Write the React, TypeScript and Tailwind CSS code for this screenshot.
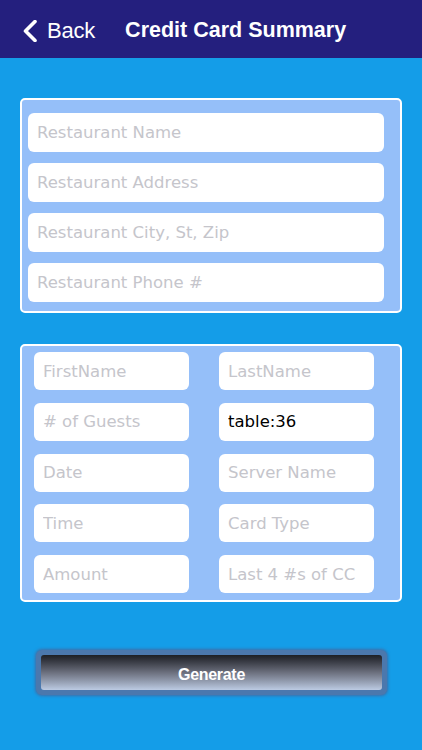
import React from 'react'

const ui = { fontFamily: '"Liberation Sans", Arial, sans-serif' }
const field = { fontFamily: '"DejaVu Sans", Verdana, sans-serif' }

function Field({ placeholder, value, className }: { placeholder: string; value?: string; className: string }) {
    return (
        <input
            readOnly
            placeholder={placeholder}
            value={value ?? ''}
            style={field}
            className={`bg-white rounded-[6px] px-[9px] text-[16.5px] text-black placeholder:text-[#c5c5cb] outline-none ${className}`}
        />
    )
}

export default function App() {
    return (
        <div className="w-[422px] h-[750px] bg-[#149de8] flex flex-col overflow-hidden" style={ui}>
            <div className="h-[58px] bg-[#241f7e] flex items-center text-white shrink-0 pt-[3px]">
                <svg width="16" height="22" viewBox="0 0 16 22" className="ml-[22px]">
                    <path d="M13 1.5 L3.5 11 L13 20.5" fill="none" stroke="white" strokeWidth="3.6" strokeLinecap="round" strokeLinejoin="round" />
                </svg>
                <span className="ml-[9px] text-[22px] tracking-[-0.2px]">Back</span>
                <span className="ml-[30px] text-[21.5px] font-bold">Credit Card Summary</span>
            </div>

            <div className="mt-[40px] mx-[20px] w-[382px] border-2 border-white rounded-[5px] bg-[#95bff9] pl-[6px] pr-[16px] pt-[13px] pb-[9px] flex flex-col gap-[11px]">
                <Field placeholder="Restaurant Name" className="h-[39px] w-full" />
                <Field placeholder="Restaurant Address" className="h-[39px] w-full" />
                <Field placeholder="Restaurant City, St, Zip" className="h-[39px] w-full" />
                <Field placeholder="Restaurant Phone #" className="h-[39px] w-full" />
            </div>

            <div className="mt-[31px] mx-[20px] w-[382px] border-2 border-white rounded-[5px] bg-[#95bff9] pl-[12px] pr-[24px] pt-[6px] pb-[7px] grid grid-cols-[155px_155px] gap-x-[30px] gap-y-[12.75px]">
                <Field placeholder="FirstName" className="h-[38px] w-[155px]" />
                <Field placeholder="LastName" className="h-[38px] w-[155px]" />
                <Field placeholder="# of Guests" className="h-[38px] w-[155px]" />
                <Field placeholder="" value="table:36" className="h-[38px] w-[155px]" />
                <Field placeholder="Date" className="h-[38px] w-[155px]" />
                <Field placeholder="Server Name" className="h-[38px] w-[155px]" />
                <Field placeholder="Time" className="h-[38px] w-[155px]" />
                <Field placeholder="Card Type" className="h-[38px] w-[155px]" />
                <Field placeholder="Amount" className="h-[38px] w-[155px]" />
                <Field placeholder="Last 4 #s of CC" className="h-[38px] w-[155px]" />
            </div>

            <div className="mt-[48px] mx-[36px] w-[351px] h-[45px] rounded-[6px] bg-[#4b78ad] p-[5px] shadow-[0_0_3px_1px_#3f6fa8]">
                <button className="w-full h-full rounded-[3px] bg-gradient-to-b from-[#1d1f25] via-[#6c707e] to-[#bccbe3] text-white font-bold text-[16px] tracking-[-0.3px] flex items-center justify-center pt-[4px]">
                    Generate
                </button>
            </div>
        </div>
    )
}
